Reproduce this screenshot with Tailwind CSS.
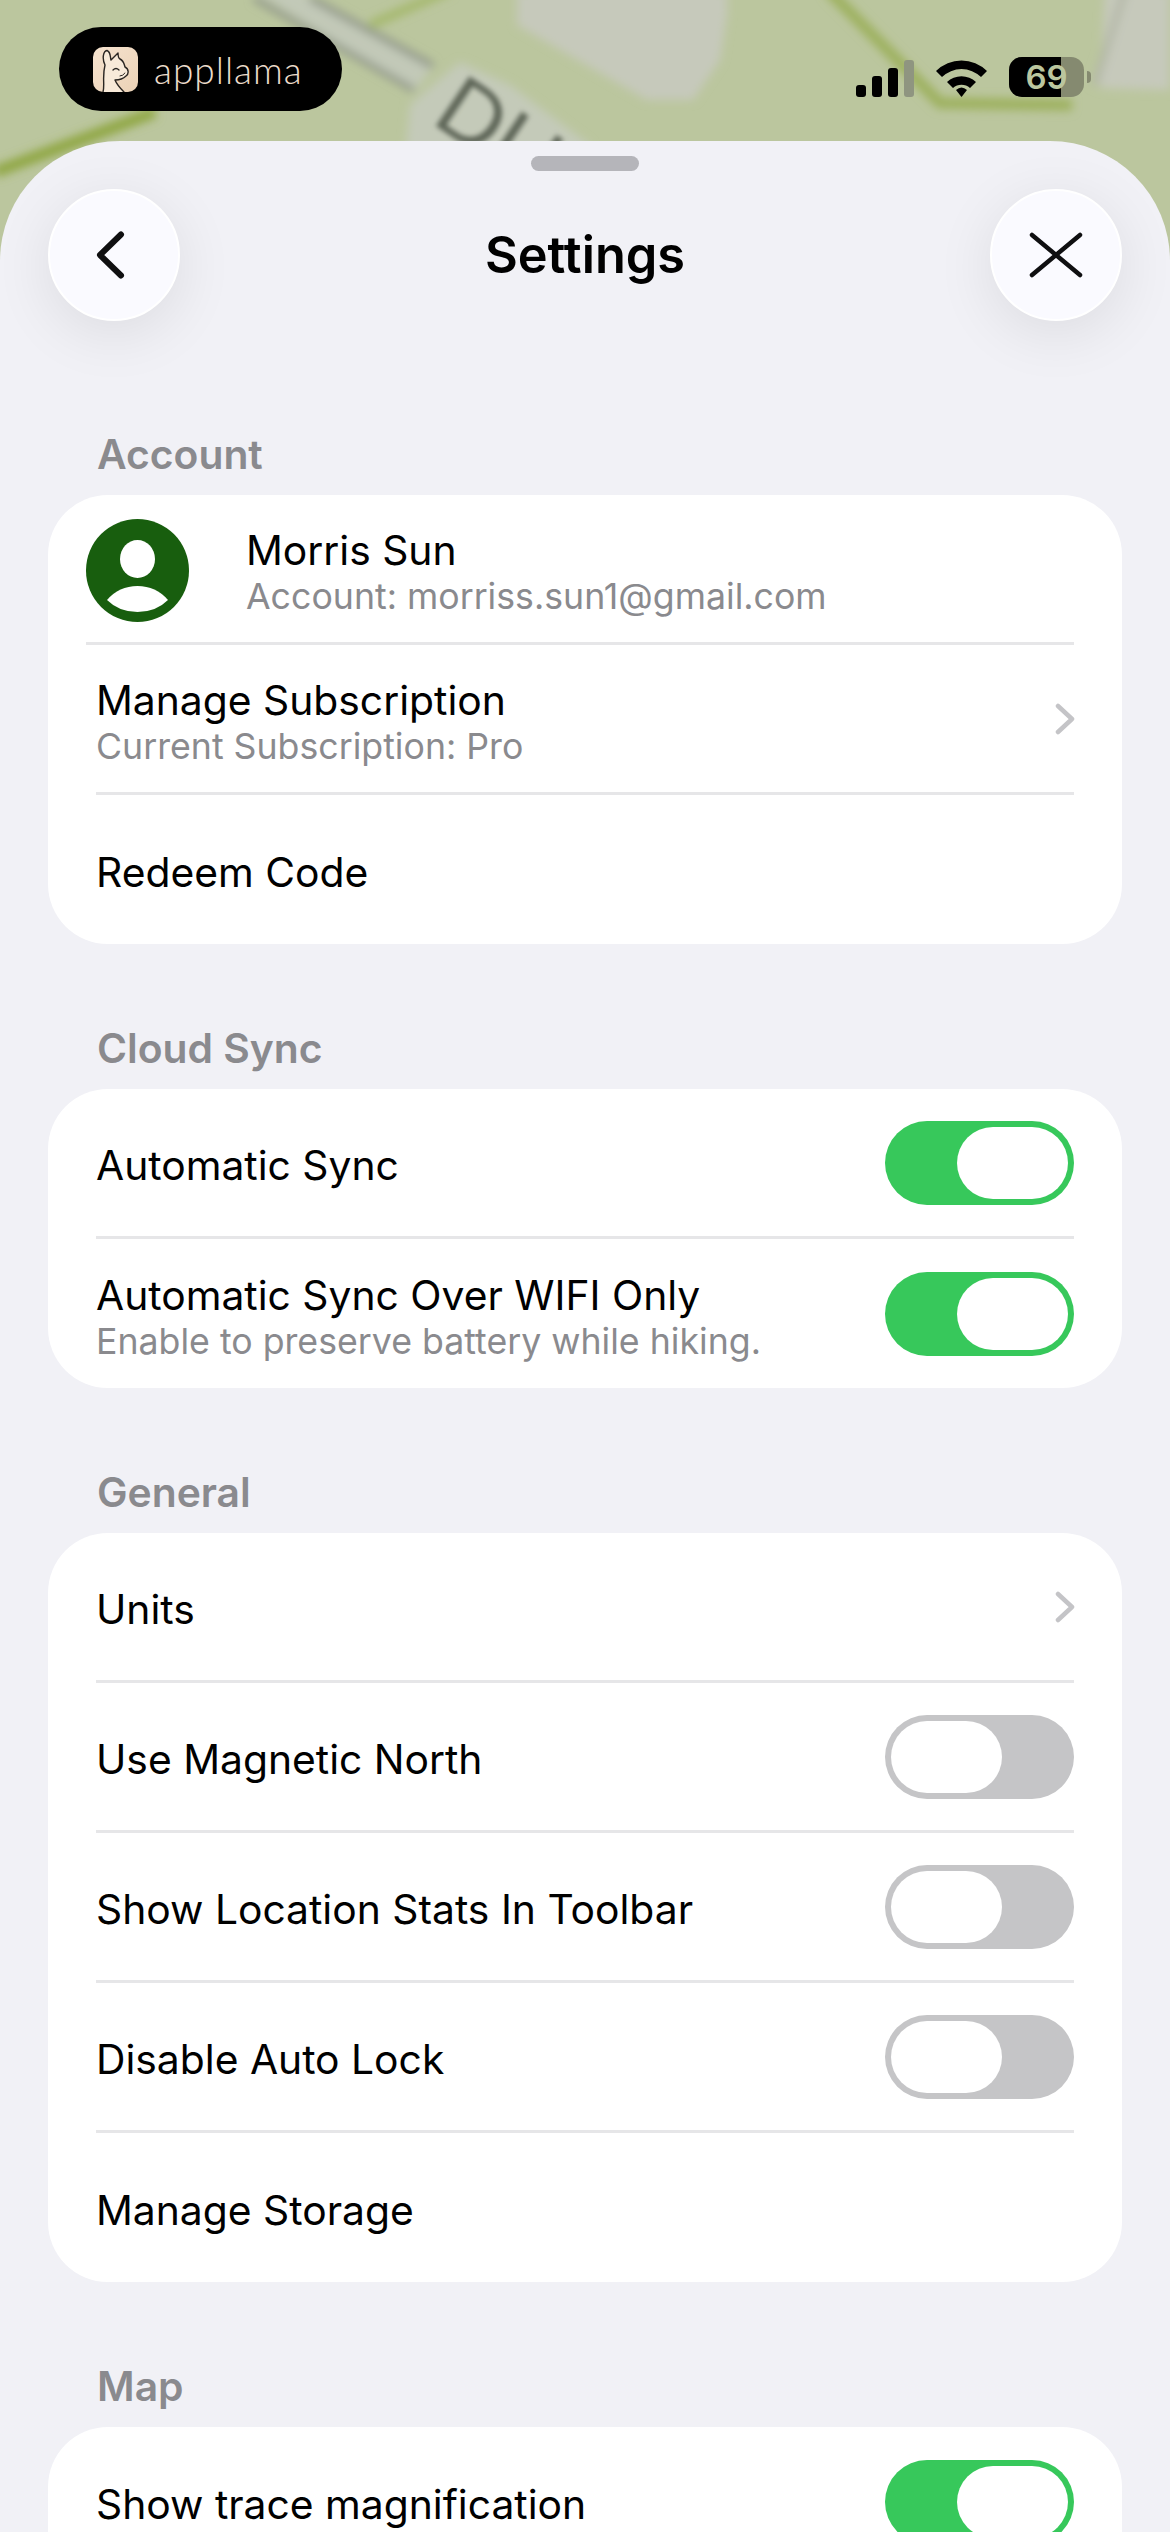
<!DOCTYPE html>
<html lang="en">
<head>
  <meta charset="UTF-8">
  <meta name="viewport" content="width=device-width, initial-scale=1.0">
  <title>Settings</title>
  <script src="https://cdn.jsdelivr.net/npm/@tailwindcss/browser@4"></script>
</head>
<body class="bg-[#f1f1f6] font-['Inter','Liberation_Sans',sans-serif]">
  <div class="relative w-[1170px] h-[2532px] overflow-hidden bg-[#f1f1f6]">

    <!-- Map behind the sheet -->
    <svg class="absolute left-0 top-0" width="1170" height="300" viewBox="0 0 1170 300">
      <defs>
        <filter id="soft"><feGaussianBlur stdDeviation="5"/></filter>
        <filter id="softer"><feGaussianBlur stdDeviation="2.400"/></filter>
      </defs>
      <rect width="1170" height="300" fill="#bbc69e"/>
      <g filter="url(#soft)">
        <path d="M517 -10 L727 -10 L727 15 L720 60 L693 100 L647 100 L517 25Z" fill="#c6c9bb"/>
        <path d="M1105 -10 L1170 -10 L1170 90 L1100 88Z" fill="#c6c9bb"/>
        <path d="M405 160 L410 105 L460 62 L510 85 L590 145 L590 160Z" fill="#c4cab9"/>
        <path d="M254 -10 L298 -10 L433 66 L414 92Z" fill="#c2c9b8"/>
        <path d="M310 -2 L433 66" stroke="#8e9488" stroke-width="6" fill="none"/>
        <path d="M254 -2 L414 90" stroke="#8e9488" stroke-width="6" fill="none"/>
        <path d="M-5 172 L155 112" stroke="#8ea63f" stroke-width="11" fill="none"/>
        <path d="M370 25 L450 -10" stroke="#a3b768" stroke-width="8" fill="none"/>
        <path d="M828 -10 L940 103 L1072 105" stroke="#9cb05c" stroke-width="11" fill="none"/>
        <path d="M1125 -10 L1095 85" stroke="#b4b8a8" stroke-width="7" fill="none"/>
      </g>
      <text transform="translate(430 122) rotate(34)" font-family="Liberation Sans" font-size="88" fill="#5f6659" filter="url(#softer)">DU</text>
    </svg>

    <!-- Status bar -->
    <div class="relative h-[141px] flex items-start justify-between pl-[59px] pr-[79px]">
      <div class="mt-[27px] w-[283px] h-[84px] rounded-full bg-black flex items-center pl-[34px] gap-[16px]">
        <svg width="45" height="45" viewBox="0 0 45 45" class="shrink-0">
          <defs>
            <linearGradient id="tile" x1="0" y1="0" x2="1" y2="1">
              <stop offset="0" stop-color="#f6e3cf"/>
              <stop offset="1" stop-color="#ebd2b6"/>
            </linearGradient>
          </defs>
          <rect width="45" height="45" rx="10" fill="url(#tile)"/>
          <path d="M10 45 C12 38 9 30 12 18 C9 12 10 4 14 3.500 C18 5 17 10 18 13 L25 6 C25 9 25 11 27 12 C31 14 31 17 32 20 C36 22 36 27 33 29 C30 32 26 33 22 33 C24 38 28 42 31 45" fill="#f8ead9" stroke="#2a2622" stroke-width="1.400" stroke-linejoin="round" stroke-linecap="round"/>
          <path d="M20 23 Q23 20 26 23" stroke="#2a2622" stroke-width="1.300" fill="none" stroke-linecap="round"/>
          <path d="M27 29 Q30 29 32 26" stroke="#2a2622" stroke-width="1" fill="none" stroke-linecap="round"/>
        </svg>
        <span class="font-['Lato',sans-serif] font-light text-[37px] leading-none tracking-[1px] text-[#ecdccb]">appllama</span>
      </div>
      <div class="mt-[57px] flex items-center">
        <svg width="58" height="37" viewBox="0 0 58 37" class="mt-[2px]">
          <rect x="0" y="25" width="10" height="12" rx="3" fill="#000"/>
          <rect x="16" y="16" width="10" height="21" rx="3" fill="#000"/>
          <rect x="32" y="8" width="10" height="29" rx="3" fill="#000"/>
          <rect x="48" y="0" width="10" height="37" rx="3" fill="#8f9580"/>
        </svg>
        <svg width="51" height="38" viewBox="0 0 51 38" class="ml-[22px] mt-[2px]">
          <path d="M0 12 A36 36 0 0 1 51 12 L45 18 A28 28 0 0 0 6 18Z" fill="#000"/>
          <path d="M11 23 A21 21 0 0 1 40 23 L34 29 A13 13 0 0 0 17 29Z" fill="#000"/>
          <path d="M20 31 Q25.500 26 31 31 L25.500 38Z" fill="#000"/>
        </svg>
        <div class="relative ml-[22px] w-[75px] h-[40px] rounded-[13px] overflow-hidden bg-[#858a70] flex items-center justify-center">
          <div class="absolute left-0 top-0 bottom-0 w-[52px] bg-black"></div>
          <span class="relative text-[33px] font-semibold leading-none text-[#bbc69e]">69</span>
        </div>
        <div class="ml-[3px] w-[4px] h-[12px] rounded-r-full bg-[#858a70]"></div>
      </div>
    </div>

    <!-- Sheet -->
    <div class="relative overflow-hidden rounded-t-[120px] bg-[#f1f1f6] px-[48px] h-[2391px]">
      <div class="absolute left-[531px] top-[15px] w-[108px] h-[15px] rounded-full bg-[#b5b5ba]"></div>

      <div class="pt-[48px] flex items-center justify-between h-[180px]">
        <button class="w-[132px] h-[132px] rounded-full bg-[#fafaff] border-2 border-white shadow-[0_12px_60px_rgba(0,0,0,0.09)] flex items-center justify-center">
          <svg width="32" height="50" viewBox="0 0 32 50" class="mr-[6px]">
            <path d="M26 4.500 L5 25 L26 45.500" stroke="#0f0f11" stroke-width="6" fill="none" stroke-linecap="round" stroke-linejoin="round"/>
          </svg>
        </button>
        <h1 class="text-[50.500px] leading-none font-semibold text-black">Settings</h1>
        <button class="w-[132px] h-[132px] rounded-full bg-[#fafaff] border-2 border-white shadow-[0_12px_60px_rgba(0,0,0,0.09)] flex items-center justify-center">
          <svg width="54" height="46" viewBox="0 0 54 46">
            <path d="M3 3 L51 43 M51 3 L3 43" stroke="#0f0f11" stroke-width="4.500" fill="none" stroke-linecap="round"/>
          </svg>
        </button>
      </div>

      <!-- Account -->
      <h2 class="mt-[108px] pl-[49px] h-[66px] text-[40.800px] leading-[50px] font-semibold text-[#8a8a8e]">Account</h2>
      <div class="rounded-[60px] bg-white">
        <div class="ml-[38px] mr-[48px] h-[150px] border-b-[3px] border-[#e6e6e8] flex items-center">
          <svg width="103" height="103" viewBox="0 0 103 103" class="shrink-0 mt-[3px]">
            <circle cx="51.500" cy="51.500" r="51.500" fill="#185e0e"/>
            <ellipse cx="51.500" cy="40" rx="17.500" ry="19" fill="#fff"/>
            <path d="M21 81 Q33 67 51.500 67 Q70 67 82 81 Q70 93 51.500 93 Q33 93 21 81Z" fill="#fff"/>
          </svg>
          <div class="ml-[57px] pt-[4px]">
            <div class="text-[40.800px] leading-[50px] text-black">Morris Sun</div>
            <div class="text-[35.700px] leading-[42px] text-[#8a8a8e]">Account: morriss.sun1@gmail.com</div>
          </div>
        </div>
        <div class="ml-[48px] mr-[48px] h-[150px] border-b-[3px] border-[#e6e6e8] flex items-center justify-between">
          <div class="pt-[4px]">
            <div class="text-[40.800px] leading-[50px] text-black">Manage Subscription</div>
            <div class="text-[35.700px] leading-[42px] text-[#8a8a8e]">Current Subscription: Pro</div>
          </div>
          <svg width="20" height="32" viewBox="0 0 20 32" class="-mr-[1px]">
            <path d="M3 3 L17 16 L3 29" stroke="#c4c4c7" stroke-width="4.500" fill="none" stroke-linecap="round" stroke-linejoin="round"/>
          </svg>
        </div>
        <div class="mx-[48px] h-[149px] flex items-center">
          <div class="pt-[4px] text-[40.800px] leading-[50px] text-black">Redeem Code</div>
        </div>
      </div>

      <!-- Cloud Sync -->
      <h2 class="mt-[78px] pt-[1px] pl-[49px] h-[67px] text-[40.800px] leading-[50px] font-semibold text-[#8a8a8e]">Cloud Sync</h2>
      <div class="rounded-[60px] bg-white">
        <div class="mx-[48px] h-[150px] border-b-[3px] border-[#e6e6e8] flex items-center justify-between">
          <div class="pt-[4px] text-[40.800px] leading-[50px] text-black">Automatic Sync</div>
          <div class="w-[189px] h-[84px] rounded-full bg-[#37c85b] p-[6px] flex justify-end">
            <div class="w-[111px] h-[72px] rounded-full bg-white"></div>
          </div>
        </div>
        <div class="mx-[48px] h-[149px] flex items-center justify-between">
          <div class="pt-[4px]">
            <div class="text-[40.800px] leading-[50px] text-black">Automatic Sync Over WIFI Only</div>
            <div class="text-[35.700px] leading-[42px] text-[#8a8a8e]">Enable to preserve battery while hiking.</div>
          </div>
          <div class="w-[189px] h-[84px] rounded-full bg-[#37c85b] p-[6px] flex justify-end">
            <div class="w-[111px] h-[72px] rounded-full bg-white"></div>
          </div>
        </div>
      </div>

      <!-- General -->
      <h2 class="mt-[78px] pt-[1px] pl-[49px] h-[67px] text-[40.800px] leading-[50px] font-semibold text-[#8a8a8e]">General</h2>
      <div class="rounded-[60px] bg-white">
        <div class="mx-[48px] h-[150px] border-b-[3px] border-[#e6e6e8] flex items-center justify-between">
          <div class="pt-[4px] text-[40.800px] leading-[50px] text-black">Units</div>
          <svg width="20" height="32" viewBox="0 0 20 32" class="-mr-[1px]">
            <path d="M3 3 L17 16 L3 29" stroke="#c4c4c7" stroke-width="4.500" fill="none" stroke-linecap="round" stroke-linejoin="round"/>
          </svg>
        </div>
        <div class="mx-[48px] h-[150px] border-b-[3px] border-[#e6e6e8] flex items-center justify-between">
          <div class="pt-[4px] text-[40.800px] leading-[50px] text-black">Use Magnetic North</div>
          <div class="w-[189px] h-[84px] rounded-full bg-[#c5c5c7] p-[6px] flex justify-start">
            <div class="w-[111px] h-[72px] rounded-full bg-white"></div>
          </div>
        </div>
        <div class="mx-[48px] h-[150px] border-b-[3px] border-[#e6e6e8] flex items-center justify-between">
          <div class="pt-[4px] text-[40.800px] leading-[50px] text-black">Show Location Stats In Toolbar</div>
          <div class="w-[189px] h-[84px] rounded-full bg-[#c5c5c7] p-[6px] flex justify-start">
            <div class="w-[111px] h-[72px] rounded-full bg-white"></div>
          </div>
        </div>
        <div class="mx-[48px] h-[150px] border-b-[3px] border-[#e6e6e8] flex items-center justify-between">
          <div class="pt-[4px] text-[40.800px] leading-[50px] text-black">Disable Auto Lock</div>
          <div class="w-[189px] h-[84px] rounded-full bg-[#c5c5c7] p-[6px] flex justify-start">
            <div class="w-[111px] h-[72px] rounded-full bg-white"></div>
          </div>
        </div>
        <div class="mx-[48px] h-[149px] flex items-center">
          <div class="pt-[4px] text-[40.800px] leading-[50px] text-black">Manage Storage</div>
        </div>
      </div>

      <!-- Map -->
      <h2 class="mt-[78px] pt-[1px] pl-[49px] h-[67px] text-[40.800px] leading-[50px] font-semibold text-[#8a8a8e]">Map</h2>
      <div class="rounded-t-[60px] bg-white h-[200px]">
        <div class="mx-[48px] h-[150px] flex items-center justify-between">
          <div class="pt-[4px] text-[40.800px] leading-[50px] text-black">Show trace magnification</div>
          <div class="w-[189px] h-[84px] rounded-full bg-[#37c85b] p-[6px] flex justify-end">
            <div class="w-[111px] h-[72px] rounded-full bg-white"></div>
          </div>
        </div>
      </div>
    </div>
  </div>
</body>
</html>
